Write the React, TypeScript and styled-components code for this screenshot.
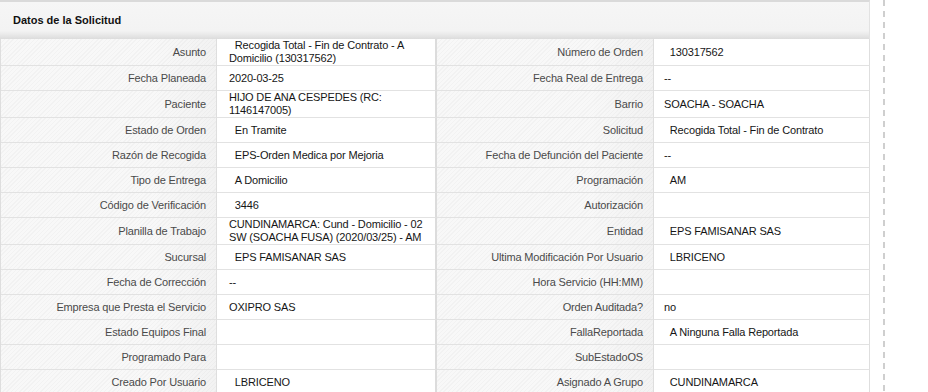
import styled, { createGlobalStyle } from 'styled-components';

const GlobalStyle = createGlobalStyle`
  html, body {
    margin: 0;
    padding: 0;
    background: #ffffff;
  }
  body {
    font-family: "Liberation Sans", Arial, sans-serif;
    font-size: 11px;
  }
`;

const Page = styled.div`
  display: flex;
  align-items: stretch;
  width: 928px;
  height: 392px;
  overflow: hidden;
`;

const Panel = styled.section`
  width: 870px;
  flex-shrink: 0;
`;

const PanelHeader = styled.div`
  box-sizing: border-box;
  height: 39px;
  border-top: 2px solid #dadada;
  border-right: 1px solid #e2e2e2;
  display: flex;
  align-items: center;
  padding: 0 0 1px 13px;
  background: linear-gradient(
    to bottom,
    #f6f6f6 0%,
    #f3f3f3 78%,
    #e9e9e9 88%,
    #dcdcdc 100%
  );
  font-weight: bold;
  font-size: 11px;
  color: #111;
`;

const Grid = styled.div`
  display: grid;
  grid-template-columns: 216px 220px 217px 216px;
  border-left: 1px solid #dedede;
  letter-spacing: -0.15px;
`;

const LabelCell = styled.div`
  box-sizing: border-box;
  min-height: 25px;
  display: flex;
  align-items: center;
  justify-content: flex-end;
  text-align: right;
  padding: 0 10px 0 6px;
  border-right: 1px solid #dedede;
  border-bottom: 1px solid #e2e2e2;
  color: #4a4a4a;
  line-height: 13px;
  background:
    linear-gradient(to right, rgba(255, 255, 255, 0) 70%, rgba(0, 0, 0, 0.025) 100%),
    repeating-linear-gradient(-45deg, #f8f8f8 0 2px, #f2f2f2 2px 3px);
`;

const ValueCell = styled.div<{ $wide?: boolean }>`
  box-sizing: border-box;
  min-height: 25px;
  display: flex;
  align-items: center;
  padding: 0 2px 0 ${({ $wide }) => ($wide ? '12px' : '10px')};
  border-right: ${({ $wide }) => ($wide ? '2px solid #dcdcdc' : '1px solid #dedede')};
  border-bottom: 1px solid #e2e2e2;
  background: #ffffff;
  color: #161616;
  line-height: 13px;
`;

const SideRail = styled.aside`
  width: 2px;
  margin-left: 13px;
  background: repeating-linear-gradient(
    to bottom,
    #cfcfcf 0 6px,
    transparent 6px 11px
  );
`;

type Field = [string, string];

const lead = (s: string) => '\u00a0\u00a0' + s;

const leftFields: Field[] = [
  ['Asunto', lead('Recogida Total - Fin de Contrato - A Domicilio (130317562)')],
  ['Fecha Planeada', '2020-03-25'],
  ['Paciente', 'HIJO DE ANA CESPEDES (RC: 1146147005)'],
  ['Estado de Orden', lead('En Tramite')],
  ['Razón de Recogida', lead('EPS-Orden Medica por Mejoria')],
  ['Tipo de Entrega', lead('A Domicilio')],
  ['Código de Verificación', lead('3446')],
  ['Planilla de Trabajo', 'CUNDINAMARCA: Cund - Domicilio - 02 SW (SOACHA FUSA) (2020/03/25) - AM'],
  ['Sucursal', lead('EPS FAMISANAR SAS')],
  ['Fecha de Corrección', '--'],
  ['Empresa que Presta el Servicio', 'OXIPRO SAS'],
  ['Estado Equipos Final', ''],
  ['Programado Para', ''],
  ['Creado Por Usuario', lead('LBRICENO')],
];

const rightFields: Field[] = [
  ['Número de Orden', lead('130317562')],
  ['Fecha Real de Entrega', '--'],
  ['Barrio', 'SOACHA - SOACHA'],
  ['Solicitud', lead('Recogida Total - Fin de Contrato')],
  ['Fecha de Defunción del Paciente', '--'],
  ['Programación', lead('AM')],
  ['Autorización', ''],
  ['Entidad', lead('EPS FAMISANAR SAS')],
  ['Ultima Modificación Por Usuario', lead('LBRICENO')],
  ['Hora Servicio (HH:MM)', ''],
  ['Orden Auditada?', 'no'],
  ['FallaReportada', lead('A Ninguna Falla Reportada')],
  ['SubEstadoOS', ''],
  ['Asignado A Grupo', lead('CUNDINAMARCA')],
];

type RowProps = {
  left: Field;
  right: Field;
};

const Row = ({ left, right }: RowProps) => (
  <>
    <LabelCell>{left[0]}</LabelCell>
    <ValueCell $wide>{left[1]}</ValueCell>
    <LabelCell>{right[0]}</LabelCell>
    <ValueCell>{right[1]}</ValueCell>
  </>
);

const App = () => {
  return (
    <>
      <GlobalStyle />
      <Page>
        <Panel>
          <PanelHeader>Datos de la Solicitud</PanelHeader>
          <Grid>
            {leftFields.map(([label, value], i) => (
              <Row key={label} left={[label, value]} right={rightFields[i]} />
            ))}
          </Grid>
        </Panel>
        <SideRail />
      </Page>
    </>
  );
};

export default App;
